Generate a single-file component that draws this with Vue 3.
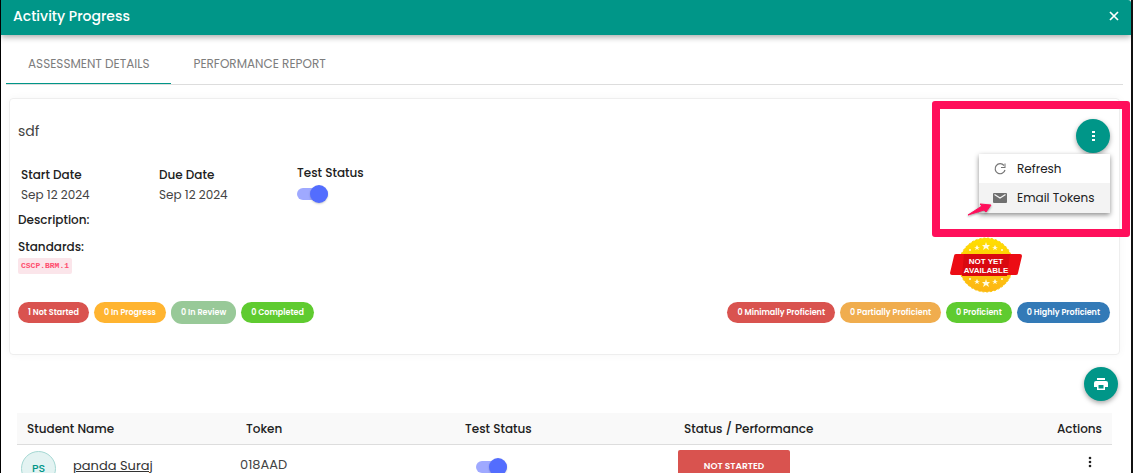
<script setup>
import { ref } from 'vue'

const activeTab = ref('details')
const menuOpen = ref(true)
const testStatus = ref(true)

const tabs = [
  { id: 'details', label: 'ASSESSMENT DETAILS' },
  { id: 'report', label: 'PERFORMANCE REPORT' }
]

const progressCounts = [
  { label: '1 Not Started', type: 'danger' },
  { label: '0 In Progress', type: 'progress' },
  { label: '0 In Review', type: 'review' },
  { label: '0 Completed', type: 'success' }
]

const proficiencyCounts = [
  { label: '0 Minimally Proficient', type: 'danger' },
  { label: '0 Partially Proficient', type: 'partial' },
  { label: '0 Proficient', type: 'success' },
  { label: '0 Highly Proficient', type: 'high' }
]

const students = ref([
  { initials: 'PS', name: 'panda Suraj', token: '018AAD', enabled: true, status: 'NOT STARTED' }
])
</script>

<template>
  <div class="dialog">
    <header class="dialog-header">
      <h1>Activity Progress</h1>
      <button class="close-btn" aria-label="Close">
        <svg width="10" height="10" viewBox="0 0 10 10">
          <path d="M1 1l8 8M9 1l-8 8" stroke="#fff" stroke-width="1.7" />
        </svg>
      </button>
    </header>

    <main class="dialog-body">
      <nav class="tabs">
        <button
          v-for="tab in tabs"
          :key="tab.id"
          class="tab"
          :class="{ active: activeTab === tab.id }"
          @click="activeTab = tab.id"
        >{{ tab.label }}</button>
      </nav>

      <section class="card">
        <div class="card-top">
          <div class="details">
            <h2 class="title">sdf</h2>
            <div class="facts">
              <div class="fact">
                <strong>Start Date</strong>
                <span>Sep 12 2024</span>
              </div>
              <div class="fact">
                <strong>Due Date</strong>
                <span>Sep 12 2024</span>
              </div>
              <div class="fact fact-status">
                <label for="test-status">Test Status</label>
                <input id="test-status" v-model="testStatus" type="checkbox" class="switch" />
              </div>
            </div>
            <strong class="description">Description:</strong>
            <strong class="standards">Standards:</strong>
            <code class="standard">CSCP.BRM.1</code>
          </div>

          <div class="side">
            <button class="fab" aria-label="More options" @click="menuOpen = !menuOpen">
              <svg width="14" height="14" viewBox="0 0 14 14" fill="#fff">
                <path d="M6 2h3v2H6zM6 6h3v2H6zM6 10h3v2H6z" />
              </svg>
            </button>

            <svg class="sticker" width="72" height="57" viewBox="0 0 72 57">
              <defs>
                <linearGradient id="gold" x1="0" y1="0" x2="0" y2="1">
                  <stop offset="0" stop-color="#ffdf00" />
                  <stop offset="1" stop-color="#fdb515" />
                </linearGradient>
              </defs>
              <circle cx="36" cy="28" r="27" fill="url(#gold)" stroke="#fbc900" stroke-width="1" stroke-dasharray="2 2" />
              <g fill="#fffbe0">
                <path d="M36 5l1 3h3l-2 2 1 3-3-2-3 2 1-3-2-2h3z" />
                <path d="M36 42l1 3h3l-2 2 1 3-3-2-3 2 1-3-2-2h3z" />
                <path d="M27 8l1 2h2l-2 1 1 2-2-1-2 1 1-2-2-1h2zM45 8l1 2h2l-2 1 1 2-2-1-2 1 1-2-2-1h2z" />
                <path d="M27 42l1 2h2l-2 1 1 2-2-1-2 1 1-2-2-1h2zM45 42l1 2h2l-2 1 1 2-2-1-2 1 1-2-2-1h2z" />
                <circle cx="20" cy="13" r="1" />
                <circle cx="52" cy="13" r="1" />
                <circle cx="20" cy="42" r="1" />
                <circle cx="52" cy="42" r="1" />
              </g>
              <path d="M6 17h64q2 0 2 2l-4 17q0 2-2 2H2q-2 0-2-2l4-17q0-2 2-2z" fill="#ec0c14" />
              <path d="M14 17h46l-3 22H12z" fill="#d90810" />
              <text x="36" y="27" class="sticker-text">NOT YET</text>
              <text x="36" y="36" class="sticker-text">AVAILABLE</text>
            </svg>

            <div v-if="menuOpen" class="menu" role="menu">
              <button class="menu-item" role="menuitem">
                <svg width="14" height="14" viewBox="0 0 14 14">
                  <path d="M11 3.500A5 5 0 1 0 12 8" fill="none" stroke="#757575" stroke-width="1.2" />
                  <path d="M12.500 1.500v4.500H8V5h3.500V1.500z" fill="#757575" />
                </svg>
                Refresh
              </button>
              <button class="menu-item hovered" role="menuitem">
                <svg width="14" height="14" viewBox="0 0 14 14">
                  <path d="M1 2h12q1 0 1 1v8q0 1-1 1H1q-1 0-1-1V3q0-1 1-1z" fill="#6f6f6f" />
                  <path d="M1.500 3.500L7 7l5.500-3.500" fill="none" stroke="#f3f3f3" stroke-width="1.3" />
                </svg>
                Email Tokens
              </button>
            </div>

            <div class="highlight">
              <svg class="pointer" width="26" height="14" viewBox="0 0 26 14">
                <path d="M1 12L15 3 13 1l11 1-5 7-2-2z" fill="#ff0f5b" stroke="#ff0f5b" stroke-linejoin="round" />
              </svg>
            </div>
          </div>
        </div>

        <div class="counts">
          <div class="badges">
            <span v-for="item in progressCounts" :key="item.label" class="badge" :class="item.type">{{ item.label }}</span>
          </div>
          <div class="badges">
            <span v-for="item in proficiencyCounts" :key="item.label" class="badge" :class="item.type">{{ item.label }}</span>
          </div>
        </div>
      </section>

      <div class="toolbar">
        <button class="fab" aria-label="Print">
          <svg width="14" height="14" viewBox="0 0 14 14" fill="#fff">
            <path d="M3 1h8v2H3zM2 4h10q2 0 2 2v4h-3V8H3v2H0V6q0-2 2-2z" />
            <path d="M3 8h8v5H3zM4.500 8v3.500h5V8z" fill-rule="evenodd" />
          </svg>
        </button>
      </div>

      <table class="students">
        <thead>
          <tr>
            <th>Student Name</th>
            <th>Token</th>
            <th>Test Status</th>
            <th>Status / Performance</th>
            <th class="actions">Actions</th>
          </tr>
        </thead>
        <tbody>
          <tr v-for="student in students" :key="student.token">
            <td>
              <div class="student">
                <span class="avatar">{{ student.initials }}</span>
                <a href="#">{{ student.name }}</a>
              </div>
            </td>
            <td class="token">{{ student.token }}</td>
            <td class="toggle-cell">
              <input v-model="student.enabled" type="checkbox" class="switch" :aria-label="'Test status for ' + student.name" />
            </td>
            <td><button class="status-btn">{{ student.status }}</button></td>
            <td class="actions">
              <button class="row-menu" aria-label="Student actions">
                <svg width="4" height="12" viewBox="0 0 4 12" fill="#222">
                  <circle cx="2" cy="2" r="1.300" />
                  <circle cx="2" cy="6" r="1.300" />
                  <circle cx="2" cy="10" r="1.300" />
                </svg>
              </button>
            </td>
          </tr>
        </tbody>
      </table>
    </main>
  </div>
</template>

<style>
body {
  overflow: hidden;
  background-color: #fff;
}
</style>

<style scoped>
.dialog {
  height: 100vh;
  box-sizing: border-box;
  overflow: hidden;
  border-left: 1px solid #000;
  border-right: 2px solid #111;
  background-color: #fff;
  color: #212121;
  font-family: Poppins, Inter, 'Liberation Sans', sans-serif;
  font-size: 12px;
  line-height: 20px;
}

button {
  border: none;
  background: none;
  padding: 0;
  color: inherit;
  font-family: inherit;
  cursor: pointer;
}

strong,
label {
  font-weight: 500;
}

.dialog-header {
  display: flex;
  align-items: center;
  justify-content: space-between;
  height: 35px;
  box-sizing: border-box;
  padding: 0 12px 4px;
  background-color: #009688;
  color: #fff;
  border-top-right-radius: 3px;
  box-shadow: 0 2px 6px rgba(0, 0, 0, 0.35);
}

.dialog-header h1 {
  margin: 0;
  font-size: 14px;
  font-weight: 500;
}

.close-btn {
  display: flex;
}

.dialog-body {
  padding: 8px 8px 0 5px;
}

.tabs {
  display: flex;
  border-bottom: 1px solid #ddd;
}

.tab {
  height: 41px;
  padding: 1px 22px 0;
  border-bottom: 1px solid transparent;
  color: #7d7d7d;
  font-size: 12px;
}

.tab.active {
  border-bottom-color: #009688;
}

.card {
  margin: 13px 3px 0;
  padding: 20px 9px 30px 8px;
  border: 1px solid #eee;
  border-radius: 4px;
  box-shadow: 0 0 8px rgba(0, 0, 0, 0.04);
}

.card-top {
  display: flex;
  justify-content: space-between;
}

.details {
  display: flex;
  flex-direction: column;
  align-items: flex-start;
}

.title {
  margin: 0 0 22px;
  font-size: 14px;
  font-weight: 400;
  line-height: 24px;
  color: #444;
}

.facts {
  display: flex;
  padding-left: 3px;
}

.fact {
  display: flex;
  flex-direction: column;
  width: 138px;
}

.fact span {
  color: #444;
}

.fact-status {
  line-height: 16px;
}

.description {
  margin-top: 5px;
}

.standards {
  margin-top: 7px;
}

.standard {
  margin-top: 1px;
  padding: 0 3px;
  border-radius: 2px;
  background-color: #fbe5ea;
  color: #ff4d6d;
  font-family: 'Liberation Mono', monospace;
  font-size: 8px;
  font-weight: 700;
  line-height: 16px;
}

.switch {
  appearance: none;
  display: flex;
  align-items: center;
  width: 31px;
  height: 12px;
  margin: 7px 0 0;
  border-radius: 6px;
  background-color: #9fa9ff;
  cursor: pointer;
}

.switch::before {
  content: '';
  flex-shrink: 0;
  width: 18px;
  height: 18px;
  border-radius: 50%;
  background-color: #fafafa;
  box-shadow: 0 1px 2px rgba(0, 0, 0, 0.2);
}

.switch:checked::before {
  margin-left: auto;
  background-color: #536dfe;
}

.side {
  position: relative;
  display: flex;
  flex-direction: column;
  align-items: flex-end;
}

.fab {
  display: flex;
  align-items: center;
  justify-content: center;
  width: 34px;
  height: 34px;
  border-radius: 50%;
  background-color: #009688;
  box-shadow: 0 2px 5px rgba(0, 0, 0, 0.35);
}

.sticker {
  margin: 84px 88px 0 0;
}

.sticker-text {
  fill: #fff;
  font-family: 'Liberation Sans Narrow', 'Liberation Sans', sans-serif;
  font-size: 8px;
  font-weight: 700;
  text-anchor: middle;
}

.menu {
  position: absolute;
  top: 35px;
  right: 0;
  z-index: 1;
  width: 131px;
  background-color: #fff;
  box-shadow: 0 2px 5px rgba(0, 0, 0, 0.45);
}

.menu-item {
  display: flex;
  align-items: center;
  gap: 10px;
  width: 100%;
  height: 29px;
  padding-left: 14px;
  font-size: 12px;
  white-space: nowrap;
}

.menu-item.hovered {
  height: 30px;
  background-color: #f3f3f3;
}

.highlight {
  position: absolute;
  top: -18px;
  right: -20px;
  z-index: 2;
  width: 182px;
  height: 120px;
  border: 8px solid #ff0f5b;
  border-radius: 3px;
  pointer-events: none;
}

.pointer {
  position: absolute;
  top: 94px;
  left: 27px;
  filter: drop-shadow(0 1px 1px rgba(0, 0, 0, 0.4));
}

.counts {
  display: flex;
  justify-content: space-between;
  margin-top: 7px;
}

.badges {
  display: flex;
  align-items: center;
  gap: 5px;
}

.badge {
  padding: 0 10px;
  border-radius: 11px;
  color: #fff;
  font-size: 8px;
  font-weight: 600;
  line-height: 21px;
  white-space: nowrap;
}

.badge.danger {
  background-color: #d9534f;
}

.badge.progress {
  background-color: #ffb430;
}

.badge.review {
  background-color: #98c998;
  line-height: 23px;
}

.badge.success {
  background-color: #5fcb30;
}

.badge.partial {
  background-color: #f0ad4e;
}

.badge.high {
  background-color: #337ab7;
}

.toolbar {
  display: flex;
  justify-content: flex-end;
  padding: 12px 5px 12px;
}

.students {
  width: calc(100% - 22px);
  margin-left: 11px;
  table-layout: fixed;
  border-collapse: collapse;
}

.students th {
  height: 31px;
  padding: 0 10px;
  border-bottom: 1px solid #ddd;
  background-color: #f9f9f9;
  font-weight: 500;
  text-align: left;
}

.students td {
  padding: 5px 4px;
  vertical-align: top;
}

.students .actions {
  text-align: right;
}

.student {
  display: flex;
  align-items: center;
  gap: 17px;
  padding-top: 1px;
}

.student a {
  margin-bottom: 6px;
  color: #333;
  font-size: 13px;
  text-underline-offset: 1px;
}

.avatar {
  width: 33px;
  height: 33px;
  border: 1px solid #a5d8d3;
  border-radius: 50%;
  background-color: #e3f3f2;
  color: #009688;
  font-size: 11px;
  font-weight: 500;
  line-height: 32px;
  text-align: center;
}

.students .token {
  padding-top: 10px;
  font-size: 13px;
  color: #444;
}

.students .toggle-cell {
  padding: 9px 21px 0;
}

.status-btn {
  width: 112px;
  height: 32px;
  border-radius: 2px;
  background-color: #d9534f;
  color: #fff;
  font-size: 9px;
  font-weight: 600;
}

.row-menu {
  padding: 4px 16px;
}
</style>
